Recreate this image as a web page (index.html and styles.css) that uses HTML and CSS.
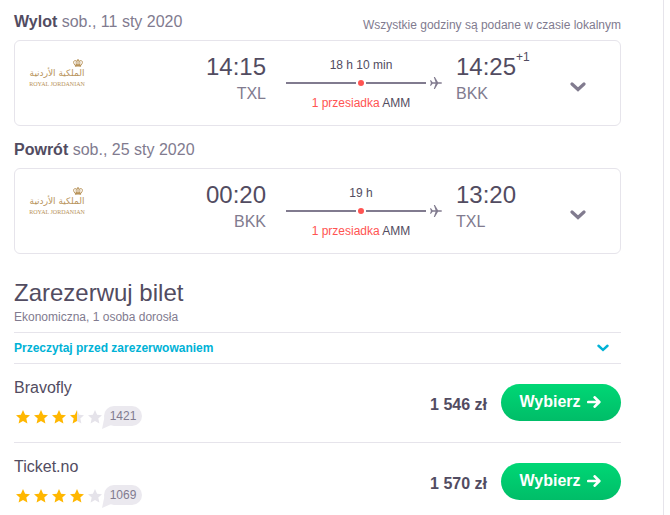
FILE: index.html
```html
<!DOCTYPE html>
<html lang="pl">

<head>
    <meta charset="UTF-8">
    <meta name="viewport" content="width=device-width, initial-scale=1.0">
    <title>Zarezerwuj bilet</title>
    <link rel="stylesheet" href="styles.css">
</head>

<body>
    <!-- Shared icons -->
    <svg class="sprite" aria-hidden="true">
        <symbol id="crown" viewBox="0 0 20 16">
            <path d="M4 12C-2 6 3 1 7 4Q8 2.5 10 2.5Q12 2.5 13 4C17 1 22 6 16 12M7.5 12C5.5 8 6.5 5 7 4M12.5 12C14.5 8 13.5 5 13 4M10 0V12" fill="none" stroke="#b8935a" stroke-width="2" />
            <path d="M3.5 11.5Q10 9.5 16.5 11.5L16 15.5Q10 14 4 15.5Z" fill="#b8935a" />
        </symbol>
        <symbol id="plane" viewBox="0 0 12 12">
            <path d="M0 3.2H1L2.6 5.3H5.6L3.8 0H4.9L8 5.3H11Q12 5.5 12 6Q12 6.5 11 6.7H8L4.9 12H3.8L5.6 6.7H2.6L1 8.8H0L.9 6Z" />
        </symbol>
        <symbol id="chevron" viewBox="0 0 16 10">
            <path d="M2 2L8 7.5L14 2" fill="none" stroke="currentColor" stroke-width="3.2" stroke-linecap="round" />
        </symbol>
        <symbol id="arrow" viewBox="0 0 14 12">
            <path d="M1.3 6H12M7.7 1.4L12.3 6L7.7 10.6" fill="none" stroke="currentColor" stroke-width="2.7" stroke-linecap="round" stroke-linejoin="round" />
        </symbol>
        <symbol id="star" viewBox="0 0 14 14">
            <path d="M7 0L9.1 4.7L14 5.2L10.3 8.5L11.4 13.6L7 11L2.6 13.6L3.7 8.5L0 5.2L4.9 4.7Z" />
        </symbol>
        <symbol id="half-star" viewBox="0 0 14 14">
            <path d="M7 0L4.9 4.7L0 5.2L3.7 8.5L2.6 13.6L7 11Z" fill="#ffb700" />
            <path d="M7 0L9.1 4.7L14 5.2L10.3 8.5L11.4 13.6L7 11Z" fill="#e5e3ea" />
        </symbol>
    </svg>

    <main class="panel">
        <!-- Outbound -->
        <div class="leg-header">
            <h2><strong>Wylot</strong> sob., 11 sty 2020</h2>
            <span class="note">Wszystkie godziny są podane w czasie lokalnym</span>
        </div>
        <div class="card">
            <div class="logo">
                <svg class="crown"><use href="#crown" /></svg>
                <span class="logo-ar" lang="ar" dir="rtl">الملكية الأردنية</span>
                <span class="logo-en">ROYAL JORDANIAN</span>
            </div>
            <div class="place depart">
                <div class="time">14:15</div>
                <div class="code">TXL</div>
            </div>
            <div class="route">
                <div class="duration">18 h 10 min</div>
                <div class="track">
                    <span class="line"></span>
                    <span class="dot"></span>
                    <span class="line"></span>
                    <svg class="plane"><use href="#plane" /></svg>
                </div>
                <div class="stops"><span>1 przesiadka</span> AMM</div>
            </div>
            <div class="place">
                <div class="time">14:25<span class="next-day">+1</span></div>
                <div class="code">BKK</div>
            </div>
            <button class="expand" aria-label="Szczegóły wylotu"><svg><use href="#chevron" /></svg></button>
        </div>

        <!-- Return -->
        <div class="leg-header">
            <h2><strong>Powrót</strong> sob., 25 sty 2020</h2>
        </div>
        <div class="card">
            <div class="logo">
                <svg class="crown"><use href="#crown" /></svg>
                <span class="logo-ar" lang="ar" dir="rtl">الملكية الأردنية</span>
                <span class="logo-en">ROYAL JORDANIAN</span>
            </div>
            <div class="place depart">
                <div class="time">00:20</div>
                <div class="code">BKK</div>
            </div>
            <div class="route">
                <div class="duration">19 h</div>
                <div class="track">
                    <span class="line"></span>
                    <span class="dot"></span>
                    <span class="line"></span>
                    <svg class="plane"><use href="#plane" /></svg>
                </div>
                <div class="stops"><span>1 przesiadka</span> AMM</div>
            </div>
            <div class="place">
                <div class="time">13:20</div>
                <div class="code">TXL</div>
            </div>
            <button class="expand" aria-label="Szczegóły powrotu"><svg><use href="#chevron" /></svg></button>
        </div>

        <!-- Booking -->
        <h1>Zarezerwuj bilet</h1>
        <p class="summary">Ekonomiczna, 1 osoba dorosła</p>
        <button class="read-first">
            Przeczytaj przed zarezerwowaniem
            <svg><use href="#chevron" /></svg>
        </button>

        <div class="offer">
            <div class="agent">
                <div class="name">Bravofly</div>
                <div class="rating">
                    <svg class="star"><use href="#star" /></svg>
                    <svg class="star"><use href="#star" /></svg>
                    <svg class="star"><use href="#star" /></svg>
                    <svg class="star"><use href="#half-star" /></svg>
                    <svg class="star empty"><use href="#star" /></svg>
                    <span class="reviews">1421</span>
                </div>
            </div>
            <div class="price">1 546 zł</div>
            <button class="select">Wybierz <svg><use href="#arrow" /></svg></button>
        </div>
        <div class="offer">
            <div class="agent">
                <div class="name">Ticket.no</div>
                <div class="rating">
                    <svg class="star"><use href="#star" /></svg>
                    <svg class="star"><use href="#star" /></svg>
                    <svg class="star"><use href="#star" /></svg>
                    <svg class="star"><use href="#star" /></svg>
                    <svg class="star empty"><use href="#star" /></svg>
                    <span class="reviews">1069</span>
                </div>
            </div>
            <div class="price">1 570 zł</div>
            <button class="select">Wybierz <svg><use href="#arrow" /></svg></button>
        </div>
    </main>
</body>

</html>
```
FILE: styles.css
```css
* {
    box-sizing: border-box;
}

body {
    margin: 0;
    font-family: "Liberation Sans", Arial, sans-serif;
    font-size: 16px;
    line-height: 24px;
    color: #524c61;
    background-color: #fff;
}

h1,
h2,
p {
    margin: 0;
    font-weight: normal;
}

button {
    padding: 0;
    border: none;
    background: none;
    font-family: inherit;
    cursor: pointer;
}

svg {
    display: block;
}

.sprite {
    position: absolute;
    width: 0;
    height: 0;
}

.panel {
    min-height: 100vh;
    margin-right: 6px;
    padding: 10px 42px 0 14px;
    border-right: 1px solid #e6e4eb;
}

/* Flight legs */
.leg-header {
    display: flex;
    justify-content: space-between;
    align-items: flex-end;
    margin-bottom: 6px;
}

.leg-header h2 {
    font-size: 16px;
    color: #817b8f;
}

.leg-header strong {
    color: #524c61;
}

.note {
    font-size: 12px;
    line-height: 18px;
    color: #817b8f;
}

.card {
    display: flex;
    align-items: flex-start;
    height: 86px;
    margin-bottom: 12px;
    padding: 11px 34px 0 14px;
    border: 1px solid #e6e4eb;
    border-radius: 6px;
}

.logo {
    display: flex;
    flex-direction: column;
    align-items: center;
    width: 56px;
    margin-top: 7px;
    color: #b8935a;
    white-space: nowrap;
}

.crown {
    align-self: flex-end;
    width: 10px;
    height: 8px;
    margin-right: 2px;
}

.logo-ar {
    font-family: "DejaVu Sans", sans-serif;
    font-size: 9px;
    line-height: 12px;
}

.logo-en {
    font-family: "Liberation Serif", serif;
    font-size: 6px;
    line-height: 10px;
}

.place {
    width: 80px;
}

.depart {
    margin-left: auto;
    text-align: right;
}

.time {
    font-size: 24px;
    line-height: 30px;
    white-space: nowrap;
}

.next-day {
    font-size: 12px;
    line-height: 0;
    vertical-align: 14px;
}

.code {
    color: #817b8f;
}

.route {
    width: 156px;
    margin: 4px 14px 0 20px;
    font-size: 12px;
    line-height: 18px;
}

.duration,
.stops {
    width: 150px;
    text-align: center;
}

.stops span {
    color: #ff5452;
}

.track {
    display: flex;
    align-items: center;
    gap: 2px;
    height: 12px;
    margin: 3px 0 5px;
}

.line {
    width: 70px;
    height: 2px;
    background-color: #817b8f;
}

.dot {
    flex: none;
    width: 6px;
    height: 6px;
    border-radius: 50%;
    background-color: #ff5452;
}

.line:nth-of-type(3) {
    width: 60px;
}

.plane {
    flex: none;
    width: 12px;
    height: 12px;
    margin-left: 2px;
    fill: #817b8f;
}

.expand {
    margin: 30px 0 0 34px;
    color: #817b8f;
}

.expand svg {
    width: 16px;
    height: 10px;
}

/* Booking options */
h1 {
    margin-top: 24px;
    font-size: 24px;
    line-height: 30px;
}

.summary {
    font-size: 12px;
    line-height: 18px;
    color: #817b8f;
}

.read-first {
    display: flex;
    justify-content: space-between;
    align-items: center;
    width: 100%;
    margin-top: 6px;
    padding: 6px 12px 6px 0;
    border-top: 1px solid #e6e4eb;
    border-bottom: 1px solid #e6e4eb;
    font-size: 12px;
    font-weight: bold;
    line-height: 18px;
    color: #00b2d6;
}

.read-first svg {
    width: 12px;
    height: 8px;
}

.offer {
    display: flex;
    align-items: center;
    padding: 11px 0 13px;
    border-bottom: 1px solid #e6e4eb;
}

.agent {
    flex: 1;
}

.name {
    padding-top: 1px;
}

.rating {
    display: flex;
    gap: 4px;
    align-items: center;
    height: 24px;
    margin: 5px 0 0 2px;
}

.star {
    width: 14px;
    height: 14px;
    fill: #ffb700;
}

.empty {
    fill: #e5e3ea;
}

.reviews {
    position: relative;
    width: 38px;
    margin: 0 0 2px -2px;
    border-radius: 10px;
    background-color: #ebe9ef;
    font-size: 12px;
    line-height: 20px;
    text-align: center;
    color: #817b8f;
}

/* Tail of the review bubble */
.reviews::before {
    content: "";
    position: absolute;
    left: -2px;
    bottom: -3px;
    width: 9px;
    height: 13px;
    background-color: #ebe9ef;
    clip-path: polygon(30% 0, 100% 70%, 0 100%);
}

.price {
    margin: 6px 14px 0 0;
    font-weight: bold;
}

.select {
    display: flex;
    justify-content: center;
    align-items: center;
    gap: 6px;
    width: 120px;
    height: 37px;
    border-radius: 19px;
    padding: 0 2px 1px 0;
    background-image: linear-gradient(#00d775, #00bd68);
    font-size: 16px;
    font-weight: bold;
    color: #fff;
}

.select svg {
    width: 14px;
    height: 12px;
}
```
